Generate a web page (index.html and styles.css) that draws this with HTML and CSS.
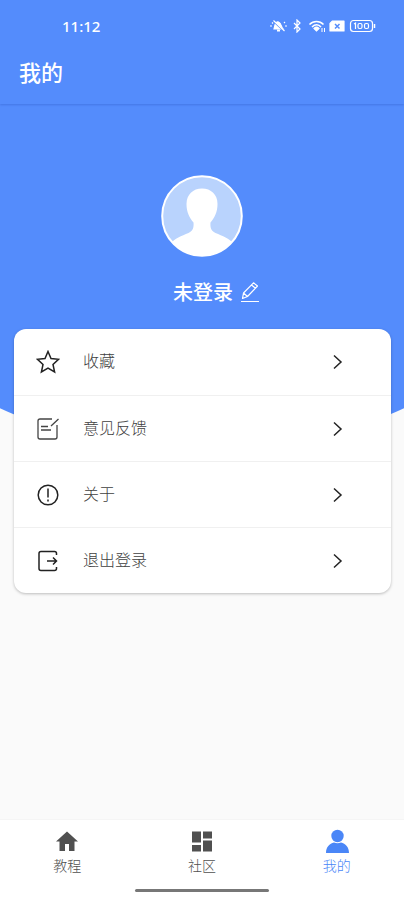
FILE: index.html
```html
<!DOCTYPE html>
<html lang="zh-CN">
<head>
<meta charset="utf-8">
<meta name="viewport" content="width=device-width, initial-scale=1">
<title>我的</title>
<link rel="stylesheet" href="styles.css">
</head>
<body>
<header class="top">
  <div class="status">
    <span class="time">11:12</span>
    <svg class="status-icons" width="106" height="14" viewBox="0 0 106 14" fill="none" stroke="currentColor" stroke-width="1.2" aria-hidden="true">
      <path d="M4 10h9c-2-2-1.500-6-4.500-7S5 6 4 10z" fill="currentColor"/>
      <path d="M7 11.500h3" stroke-width="2"/>
      <path d="M3 2l12 11" stroke="#548cfc" stroke-width="1.500"/>
      <path d="M3.500 1.500l11 10.500M0 7h2M15 7h2M2 3.500l1 1M14 4l1-1"/>
      <path d="M24 4l6 6-3 3V1l3 3-6 6"/>
      <path d="M39.500 5.500c4-4 10-4 14 0M42 8c3-3 6.500-3 9 0" stroke-width="1.600"/>
      <path d="M44 9.500c1.500-1.500 3.500-1.500 5 0L46.500 12z" fill="currentColor"/>
      <path d="M52 9v4M54.500 9v4" stroke-width="1"/>
      <path d="M62.500 2H74v10H60V4.500z" fill="currentColor" stroke-linejoin="round"/>
      <path d="M65 5l4.500 4.500M69.500 5L65 9.500" stroke="#548cfc" stroke-width="1.500"/>
      <rect x="80.500" y="1.500" width="22" height="11" rx="3"/>
      <path d="M104.500 5v4" stroke-width="1.500"/>
      <path d="M84 5l1.500-1v6"/>
      <rect x="88" y="4.500" width="4" height="5" rx="1.500"/>
      <rect x="94.500" y="4.500" width="4" height="5" rx="1.500"/>
    </svg>
  </div>
  <h1 class="title">我的</h1>
</header>

<main class="main">
  <section class="hero">
    <svg class="avatar" width="82" height="82" viewBox="0 0 82 82" role="img" aria-label="头像">
      <defs><clipPath id="round"><circle cx="41" cy="41" r="39.500"/></clipPath></defs>
      <circle cx="41" cy="41" r="40" fill="#b9d3fd"/>
      <path clip-path="url(#round)" fill="#fff" d="M41 13.500c-9 0-15.500 6-15.500 15.500 0 8 3 14 7 18.500.500 6-1 8.500-5 10.500-7 3-14 5-18 11V82h63V69c-4-6-11-8-18-11-4-2-5.500-4.500-5-10.500 4-4.500 7-10.500 7-18.500 0-9.500-6.500-15.500-15.500-15.500z"/>
      <circle cx="41" cy="41" r="39.800" fill="none" stroke="#fff" stroke-width="2"/>
    </svg>
    <div class="user">
      <span class="name">未登录</span>
      <button class="edit" type="button" aria-label="编辑">
        <svg width="18" height="22" viewBox="0 0 18 22" fill="none" stroke="currentColor" stroke-width="1.200" stroke-linejoin="round" aria-hidden="true">
          <path d="M1.500 16.500l1-5.500L12.500.800l4 3.200L6.500 14.500zM10.500 3l4 3.200M2.500 11l4 3.500"/>
          <path d="M0 19.500h18"/>
        </svg>
      </button>
    </div>
  </section>

  <nav class="card" aria-label="菜单">
    <a class="row" href="#favorites">
      <svg class="icon" viewBox="0 0 24 24" aria-hidden="true"><path d="M12 1.500l3 7 7.500.800-5.500 5.200 1.600 7.500L12 18.200 5.400 22 7 14.500 1.500 9.300 9 8.500z"/></svg>
      <span class="label">收藏</span>
      <svg class="chevron" viewBox="0 0 10 16" aria-hidden="true"><path d="M1 1.500L8 8l-7 6.500"/></svg>
    </a>
    <a class="row" href="#feedback">
      <svg class="icon thin" viewBox="0 0 24 24" aria-hidden="true"><path d="M16 2H4Q2 2 2 4v16q0 2 2 2h15q2 0 2-2V8M22.500 2L15 9M5 9.500h7M5 13h10"/></svg>
      <span class="label">意见反馈</span>
      <svg class="chevron" viewBox="0 0 10 16" aria-hidden="true"><path d="M1 1.500L8 8l-7 6.500"/></svg>
    </a>
    <a class="row" href="#about">
      <svg class="icon" viewBox="0 0 24 24" aria-hidden="true"><circle cx="12" cy="12" r="9.800"/><path d="M12 5.500v9M12 16.500v2"/></svg>
      <span class="label">关于</span>
      <svg class="chevron" viewBox="0 0 10 16" aria-hidden="true"><path d="M1 1.500L8 8l-7 6.500"/></svg>
    </a>
    <a class="row" href="#logout">
      <svg class="icon" viewBox="0 0 24 24" aria-hidden="true"><path d="M20.500 6V4.500q0-2-2-2H5q-2 0-2 2v15q0 2 2 2h13.500q2 0 2-2V18M11 12h9.500M17 8.500l3.500 3.500-3.500 3.500"/></svg>
      <span class="label">退出登录</span>
      <svg class="chevron" viewBox="0 0 10 16" aria-hidden="true"><path d="M1 1.500L8 8l-7 6.500"/></svg>
    </a>
  </nav>
</main>

<footer class="bottom">
  <nav class="tabs" aria-label="主导航">
    <a class="tab" href="#tutorial">
      <svg width="26" height="26" viewBox="0 0 26 26" fill="currentColor" aria-hidden="true"><path d="M13 2.500L2 12.500h3.500V22H11v-7h4v7h5.500v-9.500H24z"/></svg>
      <span>教程</span>
    </a>
    <a class="tab" href="#community">
      <svg width="26" height="26" viewBox="0 0 26 26" fill="currentColor" aria-hidden="true"><path d="M3 2.500h9v11H3zM14 2.500h9v7h-9zM3 16h9v6.500H3zM14 11.500h9v11h-9z"/></svg>
      <span>社区</span>
    </a>
    <a class="tab active" href="#me" aria-current="page">
      <svg width="26" height="26" viewBox="0 0 26 26" fill="currentColor" aria-hidden="true"><circle cx="13.500" cy="7" r="6.200"/><path d="M2 24c0-6 3.500-9.500 8-10.500q3.500 1.500 7 0c4.500 1 8 4.500 8 10.500z"/></svg>
      <span>我的</span>
    </a>
  </nav>
  <div class="indicator"></div>
</footer>
</body>
</html>
```
FILE: styles.css
```css
* {
  box-sizing: border-box;
}

body {
  margin: 0;
  min-height: 100vh;
  display: flex;
  flex-direction: column;
  background: #fafafa;
  color: #404040;
  font-family: Roboto, "Noto Sans CJK SC", sans-serif;
}

a {
  color: inherit;
  text-decoration: none;
}

.top {
  height: 104px;
  background: #548cfc;
  color: #fff;
  box-shadow: 0 1px 2px rgba(30, 70, 180, 0.3);
  z-index: 1;
}

.status {
  display: flex;
  align-items: center;
  justify-content: space-between;
  padding: 16px 28px 0 62px;
  height: 36px;
}

.time {
  font: 500 15px/20px "Noto Sans", sans-serif;
}

.title {
  margin: 22px 0 0 19px;
  font-size: 22px;
  line-height: 32px;
  font-weight: 500;
}

.main {
  flex: 1;
}

.hero {
  display: flex;
  flex-direction: column;
  align-items: center;
  height: 349px;
  padding-top: 71px;
  background: #548cfc;
  color: #fff;
  clip-path: ellipse(102% 100% at 50% 0);
}

.avatar {
  display: block;
}

.user {
  display: flex;
  align-items: center;
  gap: 8px;
  margin-top: 20px;
  padding-left: 28px;
}

.name {
  font-size: 20px;
  line-height: 32px;
  font-weight: 500;
}

.edit {
  display: flex;
  padding: 0;
  border: 0;
  background: none;
  color: inherit;
}

.card {
  position: relative;
  margin: -124px 13px 0 14px;
  background: #fff;
  border-radius: 12px;
  box-shadow: 0 1px 3px rgba(0, 0, 0, 0.25);
}

.row {
  display: flex;
  align-items: center;
  height: 66px;
  padding: 0 48px 0 22px;
}

.row + .row {
  border-top: 1px solid #f0f0f0;
}

.icon {
  width: 24px;
  height: 24px;
  fill: none;
  stroke: #222;
  stroke-width: 1.5;
}

.thin {
  stroke: #444;
  stroke-width: 1.3;
}

.label {
  flex: 1;
  margin-left: 23px;
  font-size: 16px;
  line-height: 24px;
  font-weight: 300;
}

.chevron {
  width: 10px;
  height: 16px;
  fill: none;
  stroke: #222;
  stroke-width: 1.5;
}

.bottom {
  height: 81px;
  background: #fff;
  border-top: 1px solid #f5f5f5;
}

.tabs {
  display: grid;
  grid-template-columns: repeat(3, 1fr);
}

.tab {
  display: flex;
  flex-direction: column;
  align-items: center;
  padding-top: 9px;
  font-size: 14px;
  line-height: 20px;
  font-weight: 300;
  color: #505050;
}

.tab span {
  margin-top: 1px;
}

.active {
  color: #4a86f7;
}

.indicator {
  width: 33.3%;
  height: 3px;
  margin: 13px auto 0;
  border-radius: 2px;
  background: #777;
}
```
